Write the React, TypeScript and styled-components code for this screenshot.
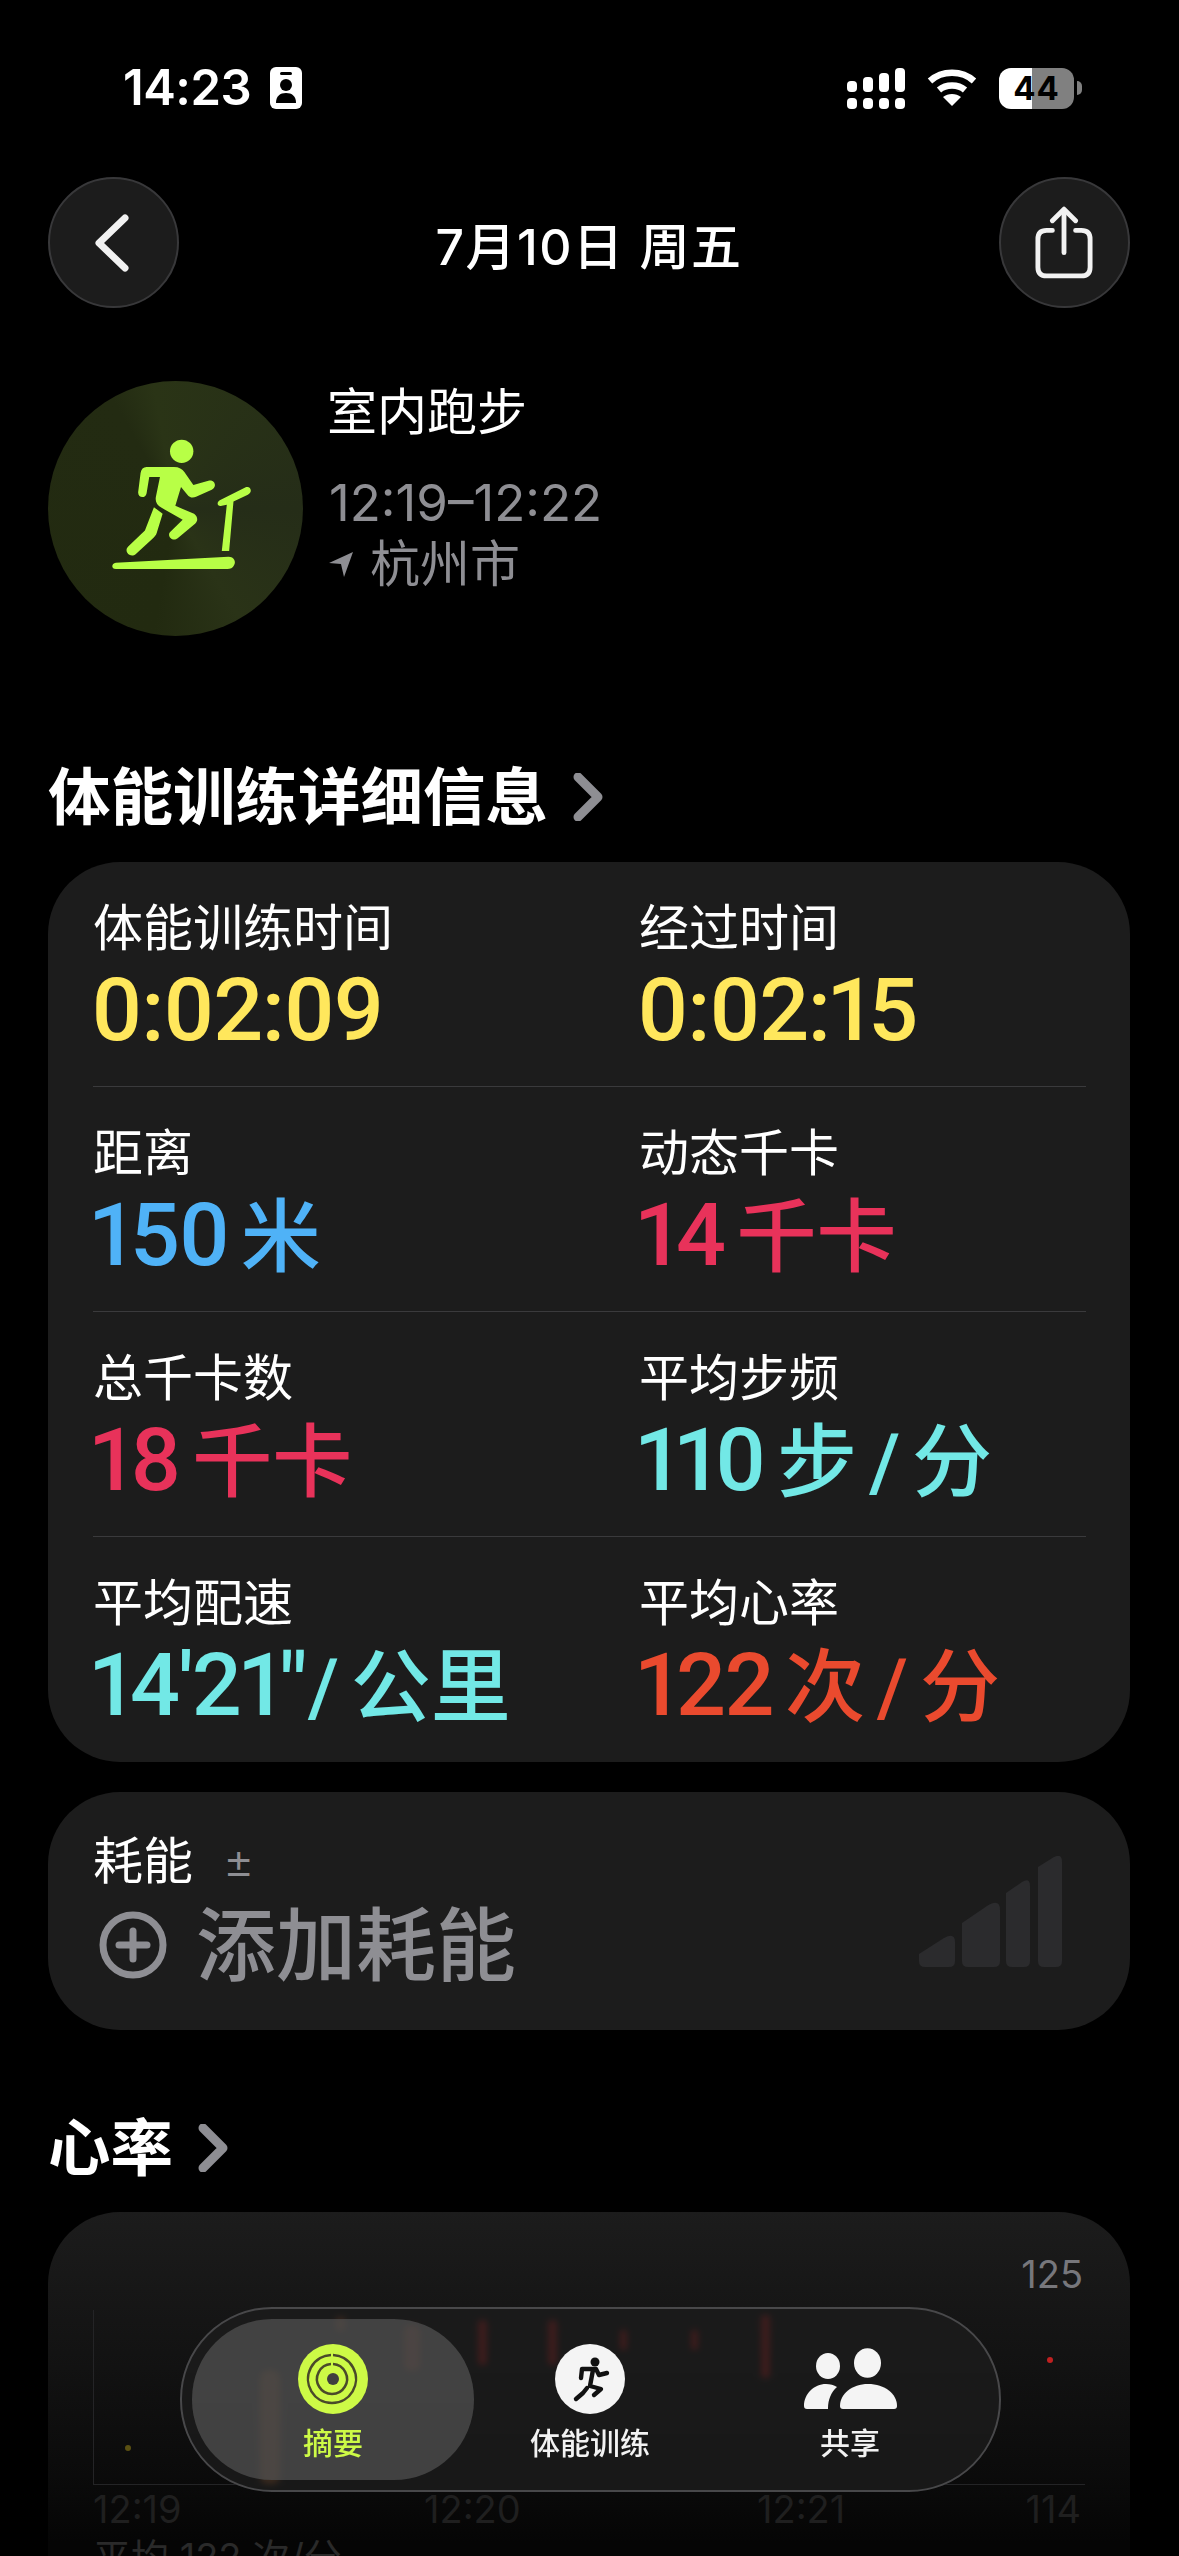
import React from "react";
import styled, { createGlobalStyle } from "styled-components";

const Global = createGlobalStyle`
  html, body { margin: 0; padding: 0; background: #000; }
  #root { width: 1179px; height: 2556px; overflow: hidden; }
`;

const FONT = `Inter, "Noto Sans CJK SC", sans-serif`;
const VALUE_FONT = `Roboto, "Noto Sans CJK SC", sans-serif`;

const Screen = styled.div`
  position: relative;
  width: 1179px;
  height: 2556px;
  overflow: hidden;
  background: #000;
  color: #fff;
  font-family: ${FONT};
`;

const StatusBar = styled.div`
  display: flex;
  justify-content: space-between;
  align-items: center;
  height: 46px;
  padding: 65px 105px 0 123px;
`;
const StatusLeft = styled.div`
  display: flex;
  align-items: center;
  gap: 19px;
`;
const Time = styled.span`
  font-size: 49px;
  font-weight: 600;
  letter-spacing: -0.5px;
  line-height: 46px;
`;
const StatusRight = styled.div`
  display: flex;
  align-items: center;
  gap: 22px;
`;
const Battery = styled.div`
  display: flex;
  align-items: center;
  justify-content: center;
  width: 75px;
  height: 41px;
  border-radius: 12px;
  background: linear-gradient(90deg, #fff 0 44%, #808080 44% 100%);
  color: #000;
  font-size: 33px;
  font-weight: 700;
  letter-spacing: 1px;
  position: relative;
  &::after {
    content: "";
    position: absolute;
    right: -8px;
    top: 13px;
    width: 5px;
    height: 14px;
    border-radius: 0 7px 7px 0;
    background: #808080;
  }
`;

const NavBar = styled.div`
  display: flex;
  justify-content: space-between;
  align-items: center;
  padding: 66px 49px 0 48px;
`;
const RoundButton = styled.div`
  width: 131px;
  height: 131px;
  box-sizing: border-box;
  border-radius: 50%;
  background: #1c1c1c;
  border: 2px solid #38383a;
  display: flex;
  align-items: center;
  justify-content: center;
`;
const NavTitle = styled.div`
  font-size: 50px;
  font-weight: 500;
  letter-spacing: 1.5px;
`;

const WorkoutHeader = styled.div`
  display: flex;
  gap: 24px;
  padding: 73px 48px 0;
`;
const WorkoutDisc = styled.div`
  width: 255px;
  height: 255px;
  border-radius: 50%;
  overflow: hidden;
  background:
    conic-gradient(from 150deg at 50% 50%, #2a3317 0deg, #222a10 40deg, #232b12 180deg, #2a3416 200deg, #252d18 300deg, #2a3317 360deg);
`;
const WorkoutInfo = styled.div`
  display: flex;
  flex-direction: column;
`;
const WorkoutName = styled.div`
  font-size: 50px;
  line-height: 62px;
  color: #fff;
`;
const WorkoutTime = styled.div`
  font-size: 51px;
  line-height: 60px;
  margin-top: 30px;
  margin-left: 2px;
  color: #8e8e93;
`;
const WorkoutPlace = styled.div`
  display: flex;
  align-items: center;
  gap: 17px;
  font-size: 50px;
  line-height: 60px;
  margin-top: 1px;
  margin-left: 2px;
  color: #8e8e93;
`;

const SectionHead = styled.div<{ $top: number }>`
  display: flex;
  align-items: center;
  gap: 25px;
  font-size: 62.5px;
  font-weight: 700;
  line-height: 80px;
  padding: ${(p) => p.$top}px 48px 0 48px;
`;

const Card = styled.div<{ $top: number }>`
  margin: ${(p) => p.$top}px 49px 0 48px;
  background: #1c1c1c;
  border-radius: 72px;
`;
const MetricsCard = styled(Card)`
  padding: 0 44px 0 45px;
  height: 900px;
  box-sizing: border-box;
`;
const MetricRow = styled.div<{ $last?: boolean }>`
  display: grid;
  grid-template-columns: 546px 1fr;
  height: 225px;
  box-sizing: border-box;
  padding-top: 36px;
  border-bottom: ${(p) => (p.$last ? "none" : "1px solid #3a3a3c")};
`;
const Metric = styled.div`
  display: flex;
  flex-direction: column;
`;
const MetricLabel = styled.div`
  font-size: 50px;
  line-height: 60px;
  color: #fff;
`;
const MetricValue = styled.div<{ $color: string }>`
  font-family: ${VALUE_FONT};
  font-feature-settings: "pnum" 1, "lnum" 1;
  font-variant-numeric: proportional-nums;
  font-size: 88px;
  line-height: 100px;
  font-weight: 500;
  letter-spacing: -1.5px;
  margin-top: 2px;
  margin-left: -2px;
  white-space: nowrap;
  color: ${(p) => p.$color};
`;
const Unit = styled.span<{ $flush?: boolean }>`
  font-size: 80px;
  font-weight: 500;
  letter-spacing: 0;
  word-spacing: -8px;
  margin-left: ${(p) => (p.$flush ? "2px" : "12px")};
`;

const EnergyCard = styled(Card)`
  height: 238px;
  box-sizing: border-box;
  padding: 39px 68px 0 45px;
`;
const EnergyLabel = styled.div`
  display: flex;
  align-items: center;
  gap: 30px;
  font-size: 50px;
  line-height: 60px;
`;
const PlusMinus = styled.span`
  color: #8e8e93;
  font-size: 48px;
  font-weight: 300;
`;
const EnergyBody = styled.div`
  display: flex;
  align-items: flex-start;
  justify-content: space-between;
  margin-top: 4px;
`;
const AddEnergy = styled.div`
  display: flex;
  align-items: center;
  gap: 29px;
  padding-left: 6px;
  font-size: 80px;
  font-weight: 500;
  line-height: 100px;
  color: #8e8e93;
`;
const EnergyScale = styled.svg`
  margin-top: -39px;
  display: block;
`;

const HeartCard = styled(Card)`
  height: 400px;
  padding: 40px 46px 0 45px;
  background: linear-gradient(180deg, #1c1c1c 0%, #0b0b0b 60%, #050505 75%, #050505 100%);
`;
const TopScale = styled.div`
  text-align: right;
  font-size: 38px;
  line-height: 44px;
  color: #77777c;
  padding-right: 1px;
`;
const ChartArt = styled.svg`
  display: block;
  margin-top: 14px;
`;
const AxisLabels = styled.div`
  display: grid;
  grid-template-columns: 331px 333px 1fr auto;
  font-size: 38px;
  line-height: 46px;
  margin-top: 1px;
  padding-right: 3px;
  color: #1f1f1f;
`;
const Average = styled.div`
  font-size: 38px;
  line-height: 50px;
  color: #2a2a2a;
`;

const TabBar = styled.div`
  position: absolute;
  left: 180px;
  top: 2307px;
  width: 821px;
  height: 185px;
  box-sizing: border-box;
  border-radius: 92px;
  background: rgba(28, 28, 28, 0.78);
  backdrop-filter: blur(3px);
  border: 2px solid #48484a;
  padding: 10px 4px 10px 10px;
  display: grid;
  grid-template-columns: 282px 232px 288px;
`;
const Tab = styled.div<{ $active?: boolean; $color: string }>`
  display: flex;
  flex-direction: column;
  align-items: center;
  border-radius: 80px;
  background: ${(p) => (p.$active ? "rgba(82,82,82,0.72)" : "transparent")};
  color: ${(p) => p.$color};
  padding-top: 25px;
  font-size: 30px;
  font-weight: 500;
  line-height: 40px;
`;
const TabIcon = styled.svg`
  display: block;
  margin-bottom: 9px;
`;

const Chevron = () => (
  <svg width="30" height="48" viewBox="0 0 30 48" fill="none">
    <path d="M5 4 L25 24 L5 44" stroke="#8e8e93" strokeWidth="9" strokeLinecap="round" strokeLinejoin="round" />
  </svg>
);

type MetricData = { label: string; value: string; unit?: string; flush?: boolean; color: string };

const rows: MetricData[][] = [
  [
    { label: "体能训练时间", value: "0:02:09", color: "#ffe75c" },
    { label: "经过时间", value: "0:02:15", color: "#ffe75c" },
  ],
  [
    { label: "距离", value: "150", unit: "米", color: "#4fb2f7" },
    { label: "动态千卡", value: "14", unit: "千卡", color: "#e8325a" },
  ],
  [
    { label: "总千卡数", value: "18", unit: "千卡", color: "#e8325a" },
    { label: "平均步频", value: "110", unit: "步 / 分", color: "#72e8e6" },
  ],
  [
    { label: "平均配速", value: "14'21\"", unit: "/ 公里", flush: true, color: "#72e8e6" },
    { label: "平均心率", value: "122", unit: "次 / 分", color: "#ea4a2e" },
  ],
];

export default function App() {
  return (
    <Screen>
      <Global />
      <StatusBar>
        <StatusLeft>
          <Time>14:23</Time>
          <svg width="32" height="42" viewBox="0 0 32 42">
            <rect width="32" height="42" rx="6" fill="#fff" />
            <rect x="10" y="5" width="12" height="3" rx="1.5" fill="#000" />
            <circle cx="16" cy="18" r="6" fill="#000" />
            <path d="M6 36c0-7 4-10 10-10s10 3 10 10z" fill="#000" />
          </svg>
        </StatusLeft>
        <StatusRight>
          <svg width="58" height="41" viewBox="0 0 58 41" fill="#fff">
            <rect x="0" y="13" width="10" height="11" rx="4" />
            <rect x="16" y="9" width="10" height="15" rx="4" />
            <rect x="32" y="5" width="10" height="19" rx="4" />
            <rect x="48" y="0" width="10" height="24" rx="4" />
            <rect x="0" y="30" width="10" height="11" rx="4" />
            <rect x="16" y="30" width="10" height="11" rx="4" />
            <rect x="32" y="30" width="10" height="11" rx="4" />
            <rect x="48" y="30" width="10" height="11" rx="4" />
          </svg>
          <svg width="50" height="38" viewBox="0 0 50 38" fill="none" stroke="#fff" strokeWidth="6.5">
            <path d="M3 12 C15 1 35 1 47 12" />
            <path d="M12 21 C19 15 31 15 38 21" />
            <path d="M25 37 L16 28 C21 24 29 24 34 28 Z" fill="#fff" stroke="none" />
          </svg>
          <Battery>44</Battery>
        </StatusRight>
      </StatusBar>

      <NavBar>
        <RoundButton>
          <svg width="40" height="60" viewBox="0 0 40 60" fill="none">
            <path d="M31 5 L5 30 L31 55" stroke="#f2f2f2" strokeWidth="7" strokeLinecap="round" strokeLinejoin="round" />
          </svg>
        </RoundButton>
        <NavTitle>7月10日 周五</NavTitle>
        <RoundButton>
          <svg width="58" height="74" viewBox="0 0 60 76" fill="none" stroke="#f2f2f2" strokeWidth="5" strokeLinecap="round" strokeLinejoin="round">
            <path d="M30 48 V4" />
            <path d="M18 15 L30 3 L42 15" />
            <path d="M18 25 H12 Q3 25 3 34 V63 Q3 72 12 72 H48 Q57 72 57 63 V34 Q57 25 48 25 H42" />
          </svg>
        </RoundButton>
      </NavBar>

      <WorkoutHeader>
        <WorkoutDisc>
          <svg width="255" height="255" viewBox="55 35 763 762" fill="#b8ff46">
            <circle cx="455" cy="245" r="35" />
            <path d="M350 292 H432 C447 292 457 298 463 307 L490 346 L535 333 C555 328 562 352 545 360 L498 381 C488 386 478 383 472 375 L453 352 L436 408 L492 432 C503 440 505 452 495 462 L443 505 C428 518 408 497 422 485 L458 450 L395 414 C380 406 375 395 378 380 L390 322 H358 L350 370 C347 388 322 385 325 365 L332 310 C334 298 340 292 350 292 Z" />
            <path d="M372 412 L398 432 L380 490 C378 496 374 500 370 504 L318 552 C302 566 280 545 295 530 L345 482 Z" />
            <path d="M575 543 L590 405 L575 408 C560 412 558 395 572 390 L648 352 C662 348 668 368 653 375 L610 395 L597 543 Z" />
            <path d="M258 578 L595 560 C612 560 618 575 612 585 C608 594 600 597 592 597 L258 597 C244 597 244 580 258 578 Z" />
          </svg>
        </WorkoutDisc>
        <WorkoutInfo>
          <WorkoutName>室内跑步</WorkoutName>
          <WorkoutTime>12:19–12:22</WorkoutTime>
          <WorkoutPlace>
            <svg width="24" height="25" viewBox="0 0 24 25" fill="#8e8e93">
              <path d="M24 0 L15 25 L12 12 L0 11 Z" />
            </svg>
            杭州市
          </WorkoutPlace>
        </WorkoutInfo>
      </WorkoutHeader>

      <SectionHead $top={121}>
        体能训练详细信息
        <Chevron />
      </SectionHead>

      <MetricsCard $top={25}>
        {rows.map((row, i) => (
          <MetricRow key={i} $last={i === rows.length - 1}>
            {row.map((m) => (
              <Metric key={m.label}>
                <MetricLabel>{m.label}</MetricLabel>
                <MetricValue $color={m.color}>
                  {m.value}
                  {m.unit && <Unit $flush={m.flush}>{m.unit}</Unit>}
                </MetricValue>
              </Metric>
            ))}
          </MetricRow>
        ))}
      </MetricsCard>

      <EnergyCard $top={30}>
        <EnergyLabel>
          耗能
          <PlusMinus>±</PlusMinus>
        </EnergyLabel>
        <EnergyBody>
          <AddEnergy>
            <svg width="68" height="68" viewBox="0 0 68 68" fill="none" stroke="#8e8e93" strokeWidth="7" strokeLinecap="round">
              <circle cx="34" cy="34" r="30" />
              <path d="M34 20 V48 M20 34 H48" />
            </svg>
            添加耗能
          </AddEnergy>
          <EnergyScale width="143" height="111" viewBox="0 0 143 111" fill="#2b2b2d">
            <path d="M0 98 L25 82 Q36 76 36 86 V105 Q36 111 30 111 H6 Q0 111 0 105 Z" />
            <path d="M43 67 L68 50 Q81 42 81 54 V105 Q81 111 75 111 H49 Q43 111 43 105 Z" />
            <path d="M87 37 L103 26 Q111 21 111 30 V105 Q111 111 105 111 H93 Q87 111 87 105 Z" />
            <path d="M119 11 L135 1 Q143 -3 143 6 V105 Q143 111 137 111 H125 Q119 111 119 105 Z" />
          </EnergyScale>
        </EnergyBody>
      </EnergyCard>

      <SectionHead $top={78}>
        心率
        <Chevron />
      </SectionHead>

      <HeartCard $top={24}>
        <TopScale>125</TopScale>
        <ChartArt width="992" height="175" viewBox="0 0 992 175">
          <path d="M0.5 0 V174 M0 174.5 H992" stroke="#242426" strokeWidth="1" fill="none" />
          <rect x="243" y="7" width="9" height="14" rx="4" fill="#a04a20" />
          <rect x="311" y="15" width="16" height="46" rx="6" fill="#a03a20" />
          <rect x="385" y="10" width="9" height="45" rx="4" fill="#b01e1e" />
          <rect x="455" y="10" width="9" height="45" rx="4" fill="#b01e1e" />
          <rect x="527" y="20" width="7" height="20" rx="3" fill="#b01e1e" />
          <rect x="598" y="20" width="7" height="20" rx="3" fill="#b01e1e" />
          <rect x="668" y="5" width="9" height="63" rx="4" fill="#b01e1e" />
          <circle cx="957" cy="50" r="3" fill="#c02020" />
          <circle cx="35" cy="138" r="3" fill="#5a5012" />
          <rect x="167" y="60" width="20" height="114" rx="8" fill="#a05520" />
        </ChartArt>
        <AxisLabels>
          <span>12:19</span>
          <span>12:20</span>
          <span>12:21</span>
          <span>114</span>
        </AxisLabels>
        <Average>平均 122 次/分</Average>
      </HeartCard>

      <TabBar>
        <Tab $active $color="#cdfa46">
          <TabIcon width="70" height="70" viewBox="0 0 70 70" fill="none">
            <circle cx="35" cy="35" r="35" fill="#cdfa46" />
            <g stroke="#4a4a2a" strokeWidth="2.5" fill="none">
              <path d="M35 11 a24 24 0 1 1 -2 0" />
              <path d="M35 20 a15 15 0 1 1 -2 0" />
            </g>
            <circle cx="35" cy="35" r="6" fill="#3f3f3f" />
          </TabIcon>
          摘要
        </Tab>
        <Tab $color="#f2f2f2">
          <TabIcon width="70" height="70" viewBox="0 0 70 70">
            <circle cx="35" cy="35" r="35" fill="#f4f4f4" />
            <circle cx="40" cy="18" r="4.5" fill="#111" />
            <path d="M26 34 L27 25 H41 L44 31 L52 29 M38 26 L35 42 L46 45 L39 51 M32 44 L28 49 L21 55" stroke="#111" strokeWidth="4.4" fill="none" strokeLinecap="round" strokeLinejoin="round" />
          </TabIcon>
          体能训练
        </Tab>
        <Tab $color="#f2f2f2">
          <TabIcon width="93" height="70" viewBox="0 -4 93 70" fill="#f4f4f4">
            <ellipse cx="24" cy="18" rx="12" ry="13" />
            <ellipse cx="63.5" cy="15" rx="13.5" ry="14.7" />
            <path d="M0 58 C0 46 10 36 22 36 C26 36 30 37 33 39 C27 44 24 52 24 60 L24 61 H3 Q0 61 0 58 Z" />
            <path d="M36 58 C36 46 48 36 64 36 C81 36 93 46 93 58 Q93 61 90 61 H39 Q36 61 36 58 Z" />
          </TabIcon>
          共享
        </Tab>
      </TabBar>
    </Screen>
  );
}
